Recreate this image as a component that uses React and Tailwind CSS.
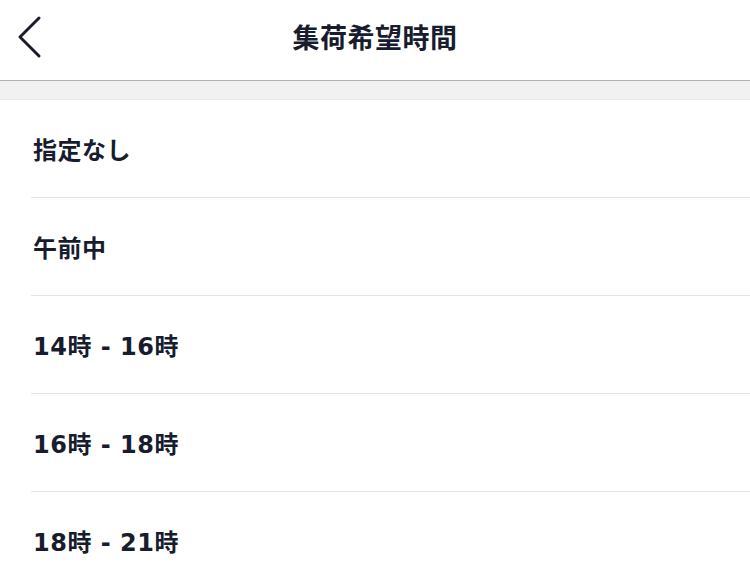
import React from "react";

const OPTIONS = ["指定なし", "午前中", "14時 - 16時", "16時 - 18時", "18時 - 21時"];

function BackChevron() {
  return (
    <svg width="30" height="44" viewBox="0 0 30 44" fill="none">
      <polyline
        points="24,3 5,22 24,41"
        stroke="#1b1d2a"
        strokeWidth="3"
        strokeLinecap="round"
        strokeLinejoin="round"
      />
    </svg>
  );
}

export default function App() {
  return (
    <div
      className="w-[750px] h-[587px] overflow-hidden bg-white text-[#171c2e]"
      style={{ fontFamily: '"Inter", "Noto Sans CJK JP", sans-serif' }}
    >
      <header className="relative h-[81px] flex items-center justify-center border-b border-[#b2b2b2]">
        <button className="absolute left-[15px] top-[15px]">
          <BackChevron />
        </button>
        <h1 className="text-[27px] font-bold tracking-[0.5px] -mt-[1px]">集荷希望時間</h1>
      </header>

      <div className="h-[19px] bg-[#f1f1f1] border-b border-[#e8e8e8]" />

      <ul style={{ fontFamily: '"DejaVu Sans", "Noto Sans CJK JP", sans-serif' }}>
        {OPTIONS.map((label, i) => (
          <li key={label} className="pl-[31px]">
            <div
              className={`h-[98px] flex items-center pl-[2px] pt-[4px] text-[24px] font-bold tracking-[0.5px] ${
                i < OPTIONS.length - 1 ? "border-b border-[#e4e4e4]" : ""
              }`}
            >
              {label}
            </div>
          </li>
        ))}
      </ul>
    </div>
  );
}
